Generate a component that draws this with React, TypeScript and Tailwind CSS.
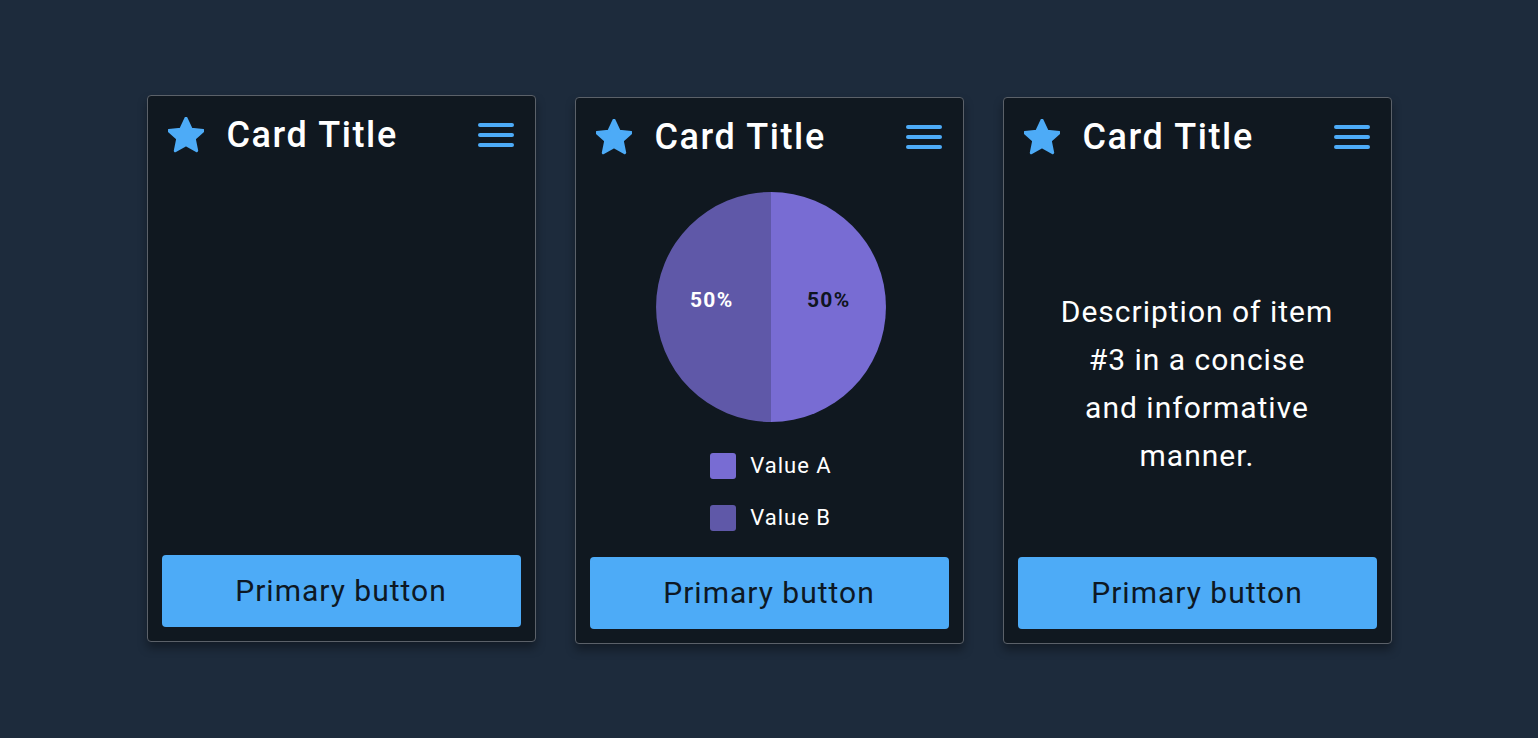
import React from "react";

const font = { fontFamily: "Roboto, 'Noto Sans', sans-serif" };

function Star() {
  return (
    <svg width="36" height="36" viewBox="2.4 2.2 19.2 19.2" className="shrink-0">
      <path
        d="M12 2.8l2.75 5.9 6.45.72-4.78 4.38 1.3 6.37L12 16.95l-5.72 3.22 1.3-6.37L2.8 9.42l6.45-.72z"
        fill="#4dabf7"
        stroke="#4dabf7"
        strokeWidth="1.6"
        strokeLinejoin="round"
      />
    </svg>
  );
}

function Menu() {
  return (
    <svg width="36" height="30" viewBox="0 0 36 30" className="shrink-0">
      <rect x="0" y="3" width="36" height="4" rx="2" fill="#4dabf7" />
      <rect x="0" y="13" width="36" height="4" rx="2" fill="#4dabf7" />
      <rect x="0" y="23" width="36" height="4" rx="2" fill="#4dabf7" />
    </svg>
  );
}

function Card({ children, className = "" }: { children?: React.ReactNode; className?: string }) {
  return (
    <div
      className={
        "w-[389px] h-[547px] flex flex-col rounded-[4px] border border-[#5b6169] bg-[#101820] shadow-[0_6px_10px_rgba(0,0,0,0.35)] " +
        className
      }
    >
      <div className="h-[78px] flex items-center pl-[20px] pr-[21px] shrink-0">
        <Star />
        <div className="ml-[23px] text-[36px] font-medium text-white leading-none tracking-[1.6px]">Card Title</div>
        <div className="flex-1" />
        <Menu />
      </div>
      <div className="flex-1 flex flex-col">{children}</div>
      <div className="px-[14px] pb-[14px] shrink-0">
        <div className="h-[72px] rounded-[4px] bg-[#4dabf7] flex items-center justify-center text-[30px] text-[#0d1824] leading-none tracking-[1px]">
          Primary button
        </div>
      </div>
    </div>
  );
}

function Pie() {
  return (
    <div className="relative w-[230px] h-[230px] ml-[4px]">
      <svg width="230" height="230" viewBox="0 0 230 230">
        <path d="M115 0 A115 115 0 0 0 115 230 Z" fill="#5f58a8" />
        <path d="M115 0 A115 115 0 0 1 115 230 Z" fill="#786cd3" />
      </svg>
      <div className="absolute left-[34px] top-[98px] text-[21px] font-bold text-white leading-none tracking-[1.3px]">50%</div>
      <div className="absolute left-[151px] top-[98px] text-[21px] font-bold text-[#0f1420] leading-none tracking-[1.3px]">50%</div>
    </div>
  );
}

export default function App() {
  return (
    <div style={font} className="w-full min-h-[738px] bg-[#1d2b3c] flex items-start justify-center gap-[39px] pt-[97px]">
      <Card className="-mt-[2px]" />
      <Card>
        <div className="flex flex-col items-center pt-[16px]">
          <Pie />
          <div className="mt-[31px] ml-[4px] flex flex-col gap-[26px]">
            <div className="flex items-center gap-[14px]">
              <div className="w-[26px] h-[26px] rounded-[3px] bg-[#786cd3]" />
              <span className="text-[22px] text-white leading-none tracking-[1px]">Value A</span>
            </div>
            <div className="flex items-center gap-[14px]">
              <div className="w-[26px] h-[26px] rounded-[3px] bg-[#5f58a8]" />
              <span className="text-[22px] text-white leading-none tracking-[1px]">Value B</span>
            </div>
          </div>
        </div>
      </Card>
      <Card>
        <div className="flex justify-center pt-[112px]">
          <p className="w-[275px] text-center text-[30px] leading-[48px] text-white tracking-[1px]">
            Description of item #3 in a concise and informative manner.
          </p>
        </div>
      </Card>
    </div>
  );
}
